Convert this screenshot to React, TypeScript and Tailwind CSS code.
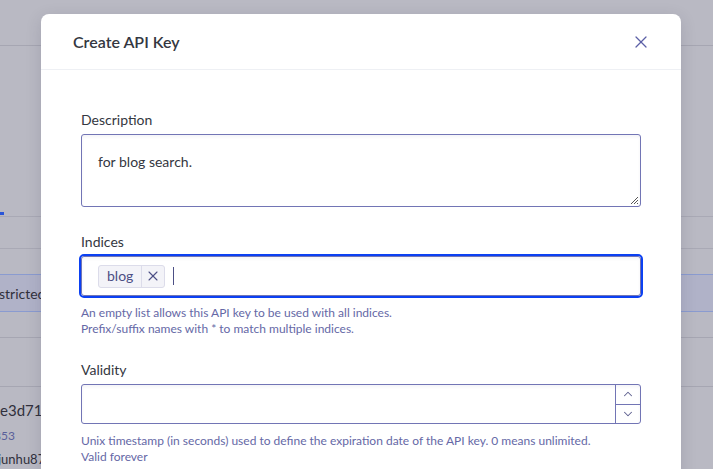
import { X, ChevronUp, ChevronDown } from "lucide-react";

const font = { fontFamily: "Lato, 'Noto Sans', sans-serif" };

// faded page that sits behind the modal overlay
function BackgroundPage() {
  return (
    <div className="flex flex-col w-full h-full bg-[#b9b9c3] text-[#30303c]">
      <div className="h-[46px] border-b border-[#a6a6b2]" />
      <div className="h-[172px] border-b border-[#a9a9b5] flex flex-col justify-end">
        <div className="w-[4px] h-[3px] bg-[#2a55d8] mb-[1px]" />
      </div>
      <div className="h-[32px] border-b border-[#a9a9b5]" />
      <div className="h-[26px] border-b border-[#8a9bd0]" />
      <div className="h-[37px] border-b border-[#8a9bd0] bg-[#b0b2c8] flex items-center text-[14px] -ml-[1px]">
        stricted
      </div>
      <div className="h-[26px] border-b border-[#a6a6b2]" />
      <div className="h-[49px] border-b border-[#a6a6b2]" />
      <div className="flex flex-col pt-[12px] -ml-[7px]">
        <div className="text-[15px] leading-[22px]">ce3d712</div>
        <div className="text-[12px] leading-[20px] text-[#5a5f9a] mt-[5px] ml-[1px]">853</div>
        <div className="text-[13px] leading-[20px] mt-[3px] ml-[5px]">junhu879</div>
      </div>
    </div>
  );
}

function Label({ children }: { children: string }) {
  return <div className="text-[14px] leading-[20px] text-[#343741] mb-[4px]">{children}</div>;
}

function Help({ children }: { children: React.ReactNode }) {
  return <div className="text-[12px] leading-[16px] text-[#6568a6] mt-[9px]">{children}</div>;
}

export default function App() {
  return (
    <div className="relative w-[713px] h-[469px] overflow-hidden" style={font}>
      <BackgroundPage />

      <div className="absolute left-[41px] top-[14px] w-[640px] h-[480px] bg-white rounded-[8px] shadow-[0_4px_16px_rgba(40,40,70,0.15)]">
        <div className="h-[56px] border-b border-[#eef0f4] flex items-center justify-between pl-[32px] pr-[30px]">
          <div className="text-[16px] font-semibold text-[#343741] pt-[1px]">Create API Key</div>
          <X size={20} strokeWidth={1.5} className="text-[#5b5fa6]" />
        </div>

        <div className="px-[40px] pt-[40px] flex flex-col">
          <Label>Description</Label>
          <div className="relative h-[73px] border border-[#7275b5] rounded-[3px] shadow-[inset_0_2px_3px_rgba(60,60,120,0.06)] pl-[16px] pt-[17px] text-[14px] leading-[20px] text-[#343741]">
            for blog search.
            <svg className="absolute right-[1px] bottom-[1px]" width="9" height="9" viewBox="0 0 9 9">
              <path d="M8 1 L1 8 M8 4 L4 8 M8 7 L7 8" stroke="#555" strokeWidth="1" />
            </svg>
          </div>

          <div className="mt-[25px]">
            <Label>Indices</Label>
          </div>
          <div className="h-[40px] border border-[#7275b5] rounded-[3px] outline-2 outline-[#0b40f2] outline-offset-0 shadow-[inset_0_2px_3px_rgba(60,60,120,0.06)] flex items-center pl-[16px] gap-[8px]">
            <div className="flex items-center h-[23px] border border-[#dcdcea] bg-[#f3f3f8] rounded-[3px] text-[14px] text-[#4c4f85]">
              <span className="px-[8px] leading-[20px]">blog</span>
              <span className="h-full border-l border-[#dcdcea] w-[23px] flex items-center justify-center">
                <X size={16} strokeWidth={1.6} className="text-[#4c4f85]" />
              </span>
            </div>
            <div className="w-[1px] h-[18px] bg-[#4c4f85]" />
          </div>
          <Help>
            An empty list allows this API key to be used with all indices.
            <br />
            Prefix/suffix names with * to match multiple indices.
          </Help>

          <div className="mt-[23px]">
            <Label>Validity</Label>
          </div>
          <div className="h-[40px] border border-[#7275b5] rounded-[3px] shadow-[inset_0_2px_3px_rgba(60,60,120,0.06)] flex justify-end">
            <div className="w-[25px] border-l border-[#7275b5] flex flex-col">
              <div className="flex-1 border-b border-[#7275b5] flex items-center justify-center">
                <ChevronUp size={14} strokeWidth={1.8} className="text-[#5d5f8f]" />
              </div>
              <div className="flex-1 flex items-center justify-center">
                <ChevronDown size={14} strokeWidth={1.8} className="text-[#5d5f8f]" />
              </div>
            </div>
          </div>
          <Help>
            Unix timestamp (in seconds) used to define the expiration date of the API key. 0 means unlimited.
            <br />
            Valid forever
          </Help>
        </div>
      </div>
    </div>
  );
}
